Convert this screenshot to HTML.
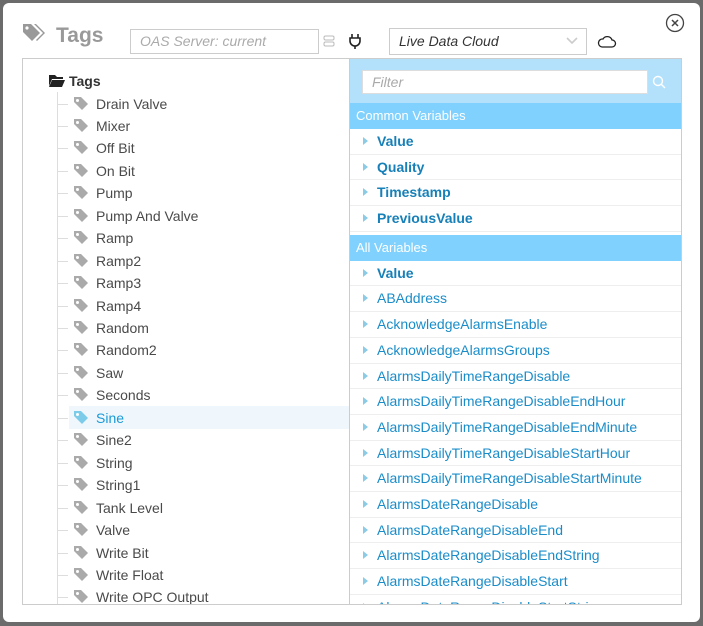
<!DOCTYPE html>
<html><head><meta charset="utf-8"><style>
*{box-sizing:border-box;margin:0;padding:0}
body{width:703px;height:626px;background:#6b6b6b;font-family:"Liberation Sans",sans-serif;position:relative;overflow:hidden}
.panel{position:absolute;left:3px;top:3px;width:697px;height:619px;background:#fff;border-radius:6px}
.abs{position:absolute}
.title{left:53px;top:21px;font-size:21px;font-weight:bold;color:#999}
.inp{border:1px solid #ccc;background:#fff;font-style:italic;font-size:14px;padding-left:9px;line-height:23px}
.tree{left:22px;top:58px;width:660px;height:547px;border:1px solid #ccc;overflow:hidden}
.tr{position:absolute;left:0;height:22px;font-size:14px;color:#4a4a4a;line-height:22px;white-space:nowrap}
.rt{position:absolute;left:326px;top:0;width:332px;height:547px;border-left:1px solid #ccc;overflow:hidden}
.row{height:25.7px;border-bottom:1px solid #eee;font-size:14px;color:#1a8dc9;line-height:25px;padding-left:27px;position:relative}
.row:before{content:"";position:absolute;left:13px;top:8px;border-left:5px solid #8bcbe6;border-top:4.5px solid transparent;border-bottom:4.5px solid transparent}
.b{font-weight:bold;color:#1780b8}
.hd{height:26px;background:#80d1fd;color:#fff;font-size:13px;line-height:26px;padding-left:6px}
</style></head><body>
<div class="panel">
<svg class="abs" style="left:19px;top:19px" width="24" height="22" viewBox="0 0 24 22"><path d="M1 2h8l9 9-8 8-9-9z" fill="#999"/><circle cx="5" cy="6" r="1.6" fill="#fff"/><path d="M12 2h2l9 9-8 8-1-1 7-7z" fill="#999"/></svg>
<div class="abs title">Tags</div>
<div class="abs inp" style="left:127px;top:26px;width:189px;height:25px;color:#aaa">OAS Server: current</div>
<svg class="abs" style="left:320px;top:32px" width="12" height="12"><rect x="1" y="1" width="10" height="4" rx="1.5" fill="none" stroke="#bbb"/><rect x="1" y="7" width="10" height="4" rx="1.5" fill="none" stroke="#bbb"/></svg>
<svg class="abs" style="left:345px;top:30px" width="14" height="16"><path d="M4 1v4M10 1v4M2 5h10v3a5 5 0 0 1-10 0zM7 13v3" fill="none" stroke="#222" stroke-width="1.6"/></svg>
<div class="abs inp" style="left:386px;top:25px;width:198px;height:27px;color:#333;line-height:25px">Live Data Cloud</div>
<svg class="abs" style="left:563px;top:34px" width="12" height="8"><path d="M1 1l5 5 5-5" fill="none" stroke="#ccc" stroke-width="1.6"/></svg>
<svg class="abs" style="left:594px;top:31px" width="20" height="15"><path d="M5 13h10a3.5 3.5 0 0 0 0-7 5 5 0 0 0-9-1A4 4 0 0 0 5 13z" fill="none" stroke="#222" stroke-width="1.3"/></svg>
<svg class="abs" style="left:662px;top:10px" width="20" height="20"><circle cx="10" cy="10" r="8.5" fill="none" stroke="#444" stroke-width="1.3"/><path d="M7 7l6 6M13 7l-6 6" stroke="#444" stroke-width="1.5"/></svg>
</div>
<div class="abs tree">
<div class="abs" style="left:34px;top:33px;width:1px;height:520px;background:#ddd"></div>
<svg class="abs" style="left:25px;top:15px" width="18" height="14"><path d="M1 1h6l2 2h6v2H4L1 12z" fill="#222"/><path d="M4 6h13l-3 7H1z" fill="#222"/></svg>
<div class="tr" style="left:46px;top:11px;font-weight:bold;color:#333">Tags</div>
<div style="position:absolute;left:46px;top:347px;width:280px;height:23px;background:#eff7fd"></div>
<div id="tl"></div>
<div class="rt">
<div style="height:44px;background:#b3e1fb;position:relative"><div class="abs inp" style="left:12px;top:11px;width:286px;height:24px;color:#aaa;border-color:#ddd">Filter</div>
<svg class="abs" style="left:302px;top:16px" width="14" height="14"><circle cx="6" cy="6" r="4.5" fill="none" stroke="#fff" stroke-width="1.4"/><path d="M9.5 9.5l3.5 3.5" stroke="#fff" stroke-width="1.4"/></svg></div>
<div class="hd">Common Variables</div>
<div class="row b">Value</div><div class="row b">Quality</div><div class="row b">Timestamp</div><div class="row b">PreviousValue</div>
<div style="height:3px"></div>
<div class="hd">All Variables</div>
<div class="row b">Value</div>
<div class="row">ABAddress</div><div class="row">AcknowledgeAlarmsEnable</div><div class="row">AcknowledgeAlarmsGroups</div><div class="row">AlarmsDailyTimeRangeDisable</div><div class="row">AlarmsDailyTimeRangeDisableEndHour</div><div class="row">AlarmsDailyTimeRangeDisableEndMinute</div><div class="row">AlarmsDailyTimeRangeDisableStartHour</div><div class="row">AlarmsDailyTimeRangeDisableStartMinute</div><div class="row">AlarmsDateRangeDisable</div><div class="row">AlarmsDateRangeDisableEnd</div><div class="row">AlarmsDateRangeDisableEndString</div><div class="row">AlarmsDateRangeDisableStart</div><div class="row">AlarmsDateRangeDisableStartString</div>
</div>
</div>
<script>
var n=["Drain Valve","Mixer","Off Bit","On Bit","Pump","Pump And Valve","Ramp","Ramp2","Ramp3","Ramp4","Random","Random2","Saw","Seconds","Sine","Sine2","String","String1","Tank Level","Valve","Write Bit","Write Float","Write OPC Output"];
var h="";n.forEach(function(t,i){var y=33.5+i*22.45;var sel=t=="Sine";var c=sel?"#7ccbe9":"#aaa";
h+='<div style="position:absolute;left:35px;top:'+(y+11)+'px;width:10px;height:1px;background:#ddd"></div>';
h+='<svg style="position:absolute;left:50px;top:'+(y+3)+'px" width="16" height="15"><path d="M1 1h7l7 7-6 6-8-8z" fill="'+c+'"/><circle cx="4.5" cy="4.5" r="1.5" fill="#fff"/></svg>';
h+='<div class="tr" style="left:73px;top:'+y+'px;'+(sel?'color:#1a9ad6':'')+'">'+t+'</div>';});
document.getElementById("tl").innerHTML=h;
</script>
</body></html>
